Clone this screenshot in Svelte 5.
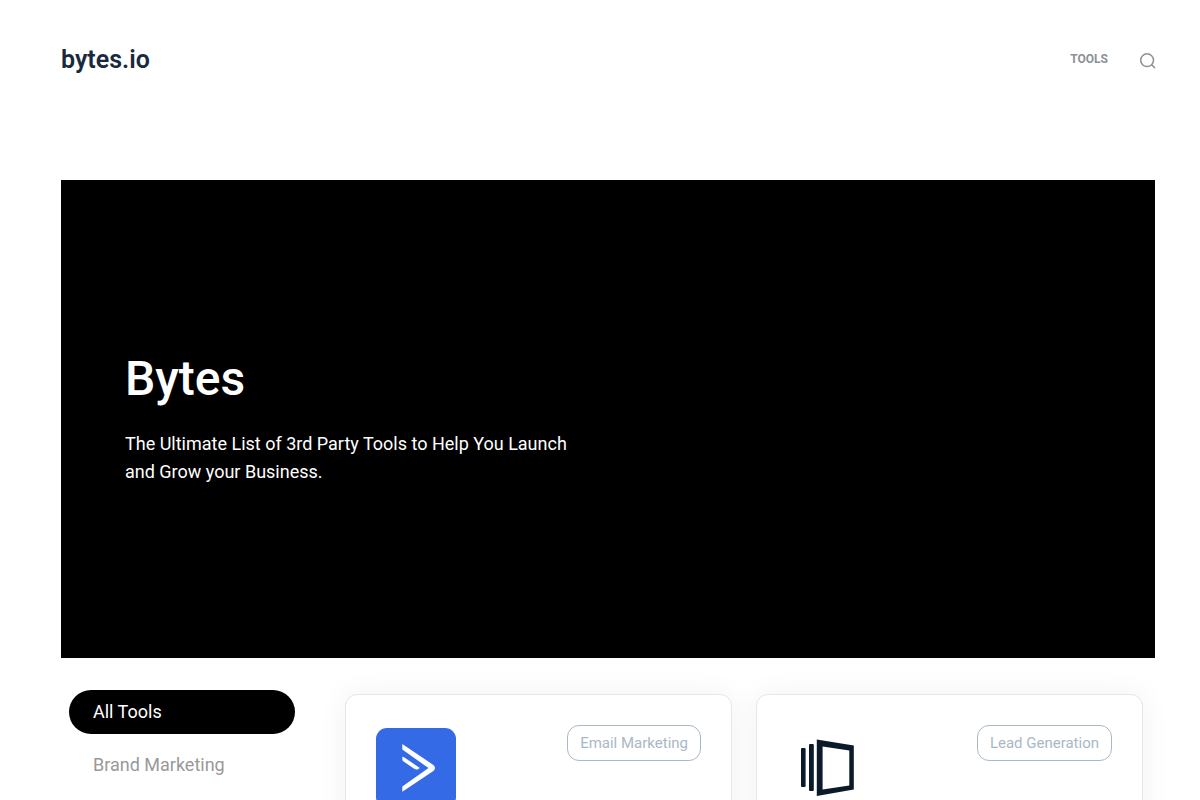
<script>
    const categories = ["All Tools", "Brand Marketing"];
    const tools = [
        { logo: "arrow", category: "Email Marketing" },
        { logo: "panels", category: "Lead Generation" }
    ];

    let selected = $state("All Tools");
</script>

<div class="page">
    <header>
        <a class="brand" href="/">bytes.io</a>
        <nav>
            <a class="nav-link" href="/tools">TOOLS</a>
            <button class="search" aria-label="Search">
                <svg width="15" height="16" viewBox="0 0 15 16" fill="none" stroke="currentColor" stroke-width="1.5">
                    <circle cx="7.1" cy="7.2" r="6.4" />
                    <path d="M11.7 11.8L15 15.1" />
                </svg>
            </button>
        </nav>
    </header>

    <section class="hero">
        <h1>Bytes</h1>
        <p>The Ultimate List of 3rd Party Tools to Help You Launch and Grow your Business.</p>
    </section>

    <main>
        <aside>
            {#each categories as category}
                <button
                    class="category"
                    class:active={selected === category}
                    onclick={() => selected = category}
                >{category}</button>
            {/each}
        </aside>

        <div class="cards">
            {#each tools as tool}
                <article class="card">
                    {#if tool.logo === "arrow"}
                        <svg class="logo" viewBox="0 0 80 80">
                            <rect width="80" height="80" rx="11" fill="#356ae6" />
                            <path d="M26.3 16L57 36.7Q59 38 59 40Q59 42 57 43.3L26.3 63.8V58.4L52.5 40L26.3 21.6Z" fill="#fff" />
                            <path d="M26.3 28.8Q27.5 28.8 28.8 29.7L43.8 40L42.4 41Q40.3 42.2 38.2 40.8L27.3 33.3Q26.3 32.6 26.3 31.3Z" fill="#fff" />
                        </svg>
                    {:else}
                        <svg class="logo" viewBox="0 0 80 80" fill="#0b1a2b">
                            <rect x="14" y="20" width="4.6" height="39" rx="1" />
                            <rect x="22" y="16" width="4.8" height="47" rx="1" />
                            <path fill-rule="evenodd" d="M29.8 11.6L66.8 17.4V61.6L29.8 68ZM35.6 18.4V61.6L62.3 57.4V22.4Z" />
                        </svg>
                    {/if}
                    <span class="tag">{tool.category}</span>
                </article>
            {/each}
        </div>
    </main>
</div>

<style>
    :global(body) {
        margin: 0;
        background: #fff;
        font-family: Roboto, "Liberation Sans", sans-serif;
    }

    .page {
        padding: 0 45px 0 61px;
    }

    header {
        display: flex;
        align-items: center;
        justify-content: space-between;
        height: 118px;
        margin-bottom: 62px;
    }

    a {
        text-decoration: none;
    }

    button {
        font-family: inherit;
        border: none;
        background: none;
        cursor: pointer;
    }

    .brand {
        color: #192a3d;
        font-size: 25px;
        font-weight: 600;
    }

    nav {
        display: flex;
        align-items: center;
        gap: 32px;
    }

    .nav-link {
        color: #8c9097;
        font-size: 12px;
        font-weight: 700;
    }

    .search {
        display: flex;
        padding: 3px 0 0;
        color: #8c9097;
    }

    .search svg {
        overflow: visible;
    }

    .hero {
        display: flex;
        flex-direction: column;
        justify-content: center;
        box-sizing: border-box;
        min-height: 478px;
        padding: 0 64px;
        background: #000;
        color: #fff;
    }

    h1 {
        margin: 0 0 24px;
        font-size: 48px;
        line-height: 54px;
        font-weight: 500;
    }

    .hero p {
        max-width: 460px;
        margin: 0;
        font-size: 18px;
        line-height: 28px;
    }

    main {
        display: flex;
        gap: 50px;
        padding: 32px 12px 0 8px;
    }

    aside {
        display: flex;
        flex-direction: column;
        flex: 0 0 226px;
        gap: 9px;
    }

    .category {
        height: 44px;
        padding: 0 24px 2px;
        border-radius: 22px;
        color: #999;
        font-size: 18px;
        text-align: left;
    }

    .category.active {
        background: #000;
        color: #fff;
    }

    .cards {
        display: grid;
        grid-template-columns: 1fr 1fr;
        flex: 1;
        gap: 24px;
        padding-top: 4px;
    }

    .card {
        display: flex;
        align-items: flex-start;
        justify-content: space-between;
        padding: 30px;
        border: 1px solid #e1e8ee;
        border-radius: 12px;
        background: #fff;
        box-shadow: 0 0 30px rgba(0, 0, 0, 0.06);
    }

    .logo {
        width: 80px;
        height: 80px;
        margin-top: 3px;
    }

    .tag {
        padding: 0 12px;
        border: 1px solid #a9b8c6;
        border-radius: 12px;
        color: #a9b8c6;
        font-size: 15px;
        line-height: 34px;
    }
</style>
